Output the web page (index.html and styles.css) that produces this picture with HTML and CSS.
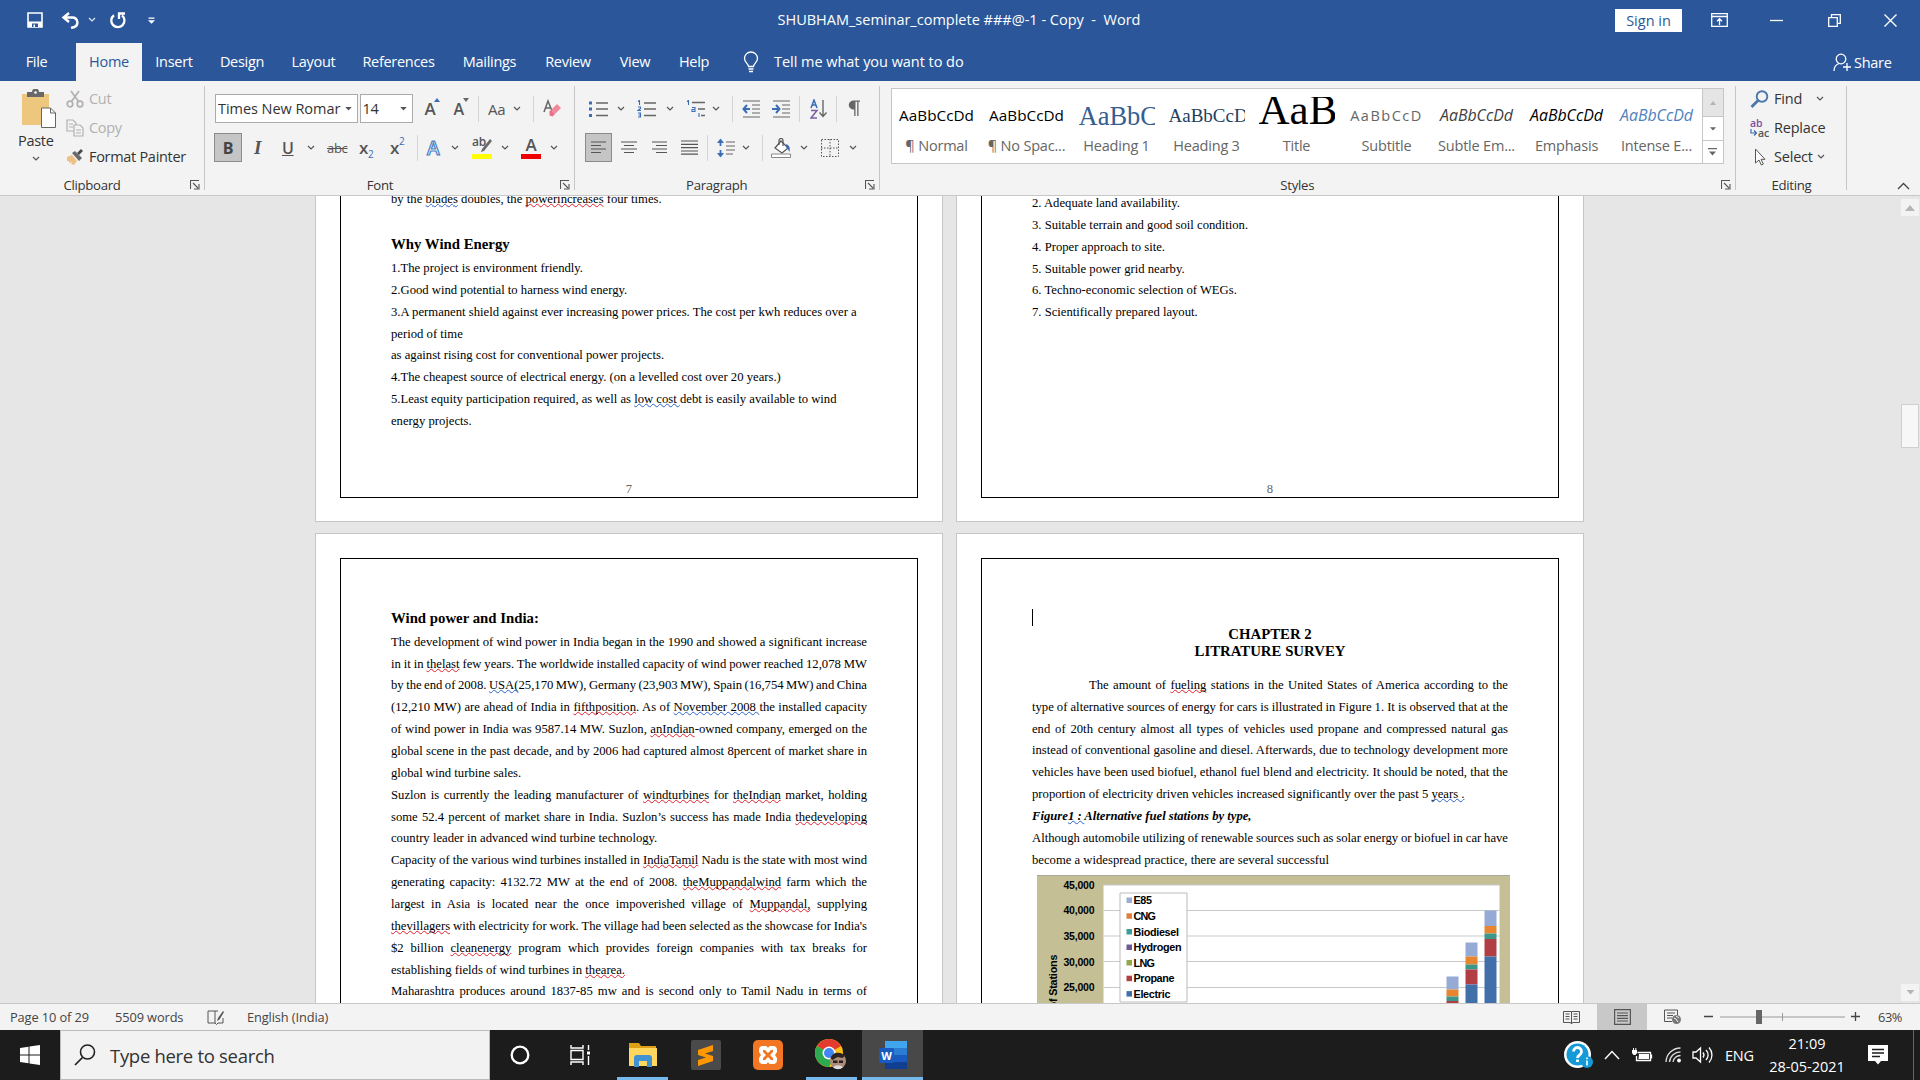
FILE: index.html
```html
<!DOCTYPE html>
<html lang="en">
<head>
<meta charset="utf-8">
<title>SHUBHAM_seminar_complete - Word</title>
<link rel="stylesheet" href="styles.css">
</head>
<body>
<svg width="0" height="0" class="defs">
  <symbol id="chev" viewBox="0 0 8 6"><path d="M1 1l3 3 3-3" fill="none" stroke="currentColor" stroke-width="1.2"/></symbol>
  <symbol id="launch" viewBox="0 0 10 10"><path d="M.5 9V.5H9M3 3l5 5M9 4v5H4" fill="none" stroke="#555" stroke-width="1.1"/></symbol>
  <symbol id="tri" viewBox="0 0 8 5"><path d="M0 0h8L4 4.5z" fill="currentColor"/></symbol>
</svg>

<header class="titlebar">
  <div class="quick">
    <svg width="16" height="16" viewBox="0 0 16 16"><path d="M1 1h14v14H1z" fill="none" stroke="#fff" stroke-width="1.6"/><path d="M1 9.500h14V15H1z" fill="#fff"/><path d="M5 11.500h6V15H5z" fill="#2b579a"/><path d="M6.500 12.500H8V15H6.500z" fill="#fff"/></svg>
    <svg width="19" height="17" viewBox="0 0 19 17"><path d="M8 1L2.500 5.500 8 10M3 5.500h8.500a5 5 0 0 1 2 9.500l-3.500 1" fill="none" stroke="#fff" stroke-width="2.400"/></svg>
    <svg width="8" height="6" color="#dfe8f5"><use href="#chev"/></svg>
    <svg width="18" height="17" viewBox="0 0 18 17"><path d="M5 3.200a6.600 6.600 0 1 0 8 .2M10 7V1.500h6" fill="none" stroke="#fff" stroke-width="2.300"/></svg>
    <svg width="7" height="7" viewBox="0 0 7 7"><path d="M.5.5h6v1.200h-6zM0 3.200h7L3.500 6.700z" fill="#fff"/></svg>
  </div>
  <div class="doc-title">SHUBHAM_seminar_complete ###@-1 - Copy&nbsp; -&nbsp; Word</div>
  <div class="window-tools">
    <span class="signin">Sign in</span>
    <svg width="17" height="14" viewBox="0 0 17 14"><path d="M.7.700h15.600v12.600H.7zM.7 3.500h15.600M8.500 12V6M6 8.200l2.500-2.500L11 8.200" fill="none" stroke="#fff" stroke-width="1.300"/></svg>
    <svg width="13" height="14" viewBox="0 0 13 14"><path d="M0 7.500h13" stroke="#fff" stroke-width="1.300"/></svg>
    <svg width="13" height="13" viewBox="0 0 13 13"><path d="M.7 3.700h8.600v8.600H.7zM3.500 3.500V.7h8.800v8.600H9.500" fill="none" stroke="#fff" stroke-width="1.300"/></svg>
    <svg width="13" height="13" viewBox="0 0 13 13"><path d="M.5.5l12 12M12.500.5l-12 12" stroke="#fff" stroke-width="1.400"/></svg>
  </div>
</header>

<nav class="tabs">
  <span>File</span><span class="on">Home</span><span>Insert</span><span>Design</span><span>Layout</span><span>References</span><span>Mailings</span><span>Review</span><span>View</span><span class="help">Help</span>
  <svg width="16" height="22" viewBox="0 0 16 22"><path d="M5.500 15.500c0-3-4-4-4-8a6.500 6.500 0 0 1 13 0c0 4-4 5-4 8zM5.500 18h5M6 20.500h4" fill="none" stroke="#fff" stroke-width="1.300"/></svg>
  <span class="tell">Tell me what you want to do</span>
  <svg width="19" height="19" viewBox="0 0 19 19"><circle cx="8" cy="6" r="4.800" fill="none" stroke="#fff" stroke-width="1.300"/><path d="M1 18c0-4 2-6.500 5-7.500M14 10v8M10 14h8" fill="none" stroke="#fff" stroke-width="1.300"/></svg>
  <span class="share">Share</span>
</nav>

<section class="ribbon">
  <div class="group clipboard">
    <div class="clip-body">
      <div class="paste">
        <svg width="36" height="40" viewBox="0 0 36 40"><path d="M1 5h27v31H1z" fill="#ecc77d"/><path d="M6 8V3h5a3.500 3.500 0 0 1 7 0h5v5z" fill="#686868"/><circle cx="14.500" cy="3.500" r="1.300" fill="#fff"/><path d="M20.500 19h9l5 5v14.500h-14z" fill="#fff" stroke="#666"/><path d="M29.500 19v5h5" fill="none" stroke="#666"/></svg>
        <span>Paste</span>
        <svg width="8" height="6" color="#555"><use href="#chev"/></svg>
      </div>
      <div class="clip-list">
        <div class="dim"><svg width="18" height="18" viewBox="0 0 18 18" fill="none" stroke="#b1b1b1" stroke-width="1.700"><circle cx="4" cy="14" r="2.800"/><circle cx="14" cy="14" r="2.800"/><path d="M5.500 11.500L13 1M12.500 11.500L5 1"/></svg>Cut</div>
        <div class="dim"><svg width="18" height="18" viewBox="0 0 18 18" fill="#f3f3f3" stroke="#b1b1b1" stroke-width="1.200"><path d="M1 1h6l3 3v8H1zM3 5h4M3 8h4"/><path d="M8 6h6l3 3v8H8zM10 11h5M10 14h5"/></svg>Copy</div>
        <div><svg width="18" height="18" viewBox="0 0 18 18"><path d="M1 9l5-2 5 6-3 4-3-1 1-2-3 1 0-2-2 0z" fill="#edc184"/><path d="M6 5l3-2 7 7-3 3z" fill="#6a6a6a"/><path d="M11 5l4-4 2 2-4 4z" fill="#4a4a4a"/></svg>Format Painter</div>
      </div>
    </div>
    <div class="foot"><span>Clipboard</span><svg width="10" height="10"><use href="#launch"/></svg></div>
  </div>

  <div class="group font">
    <div class="row font1">
      <span class="combo">Times New Romar<svg width="7" height="4" color="#555"><use href="#tri"/></svg></span>
      <span class="combo">14<svg width="7" height="4" color="#555"><use href="#tri"/></svg></span>
      <span class="glyph">A<svg width="6" height="4" viewBox="0 0 6 4"><path d="M0 4l3-4 3 4z" fill="#3a6db5"/></svg></span>
      <span class="glyph sm">A<svg width="6" height="4" viewBox="0 0 6 4"><path d="M0 0h6L3 4z" fill="#666"/></svg></span>
      <i class="sep"></i>
      <span class="glyph aa">Aa</span>
      <svg width="8" height="6" color="#555"><use href="#chev"/></svg>
      <i class="sep"></i>
      <svg width="20" height="20" viewBox="0 0 20 20"><path d="M1 13L5 2l4 10M2.500 9h5" fill="none" stroke="#666" stroke-width="1.500"/><path d="M8 11l6-6 4 4-6 6z" fill="#f08a9b"/><path d="M6.500 12.500l1.500-1.500 4 4-2.500 2.500-3-1z" fill="#e8718a"/></svg>
    </div>
    <div class="row font2">
      <span class="bold">B</span>
      <span class="glyph ital">I</span>
      <span class="glyph und">U</span>
      <svg width="8" height="6" color="#555"><use href="#chev"/></svg>
      <span class="glyph strike">abc</span>
      <span class="glyph">x<sub>2</sub></span>
      <span class="glyph">x<sup>2</sup></span>
      <i class="sep"></i>
      <span class="outline">A</span>
      <svg width="8" height="6" color="#555"><use href="#chev"/></svg>
      <svg width="22" height="22" viewBox="0 0 22 22"><text x="0" y="9" font-size="12" font-family="Open Sans" font-weight="600" fill="#555">ab</text><path d="M18 2l2 2-8 10-3 1 1-3z" fill="#6a6a6a"/><path d="M0 17h20v5H0z" fill="#ff0"/></svg>
      <svg width="8" height="6" color="#555"><use href="#chev"/></svg>
      <svg width="21" height="22" viewBox="0 0 21 22"><text x="4.500" y="14" font-size="17" font-family="Open Sans" font-weight="600" fill="#555">A</text><path d="M0 17h20v5H0z" fill="#f00000"/></svg>
      <svg width="8" height="6" color="#555"><use href="#chev"/></svg>
    </div>
    <div class="foot"><span>Font</span><svg width="10" height="10"><use href="#launch"/></svg></div>
  </div>

  <div class="group para">
    <div class="row para1">
      <svg width="19" height="18" viewBox="0 0 19 18"><path d="M0 1.500h3v3H0zM0 7.500h3v3H0zM0 14h3v3H0z" fill="#3a6db5"/><path d="M7 3h12M7 9h12M7 15.500h12" stroke="#666" stroke-width="1.300"/></svg>
      <svg width="8" height="6" color="#555"><use href="#chev"/></svg>
      <svg width="20" height="18" viewBox="0 0 20 18"><path d="M1 1.500l1.500-1V5M1 7h2.500v1.500L1 10.500h3M1 13h2.500v4H1M1.500 15h2" fill="none" stroke="#3a6db5" stroke-width="1.100"/><path d="M7 3h12M7 9h12M7 15.500h12" stroke="#666" stroke-width="1.300"/></svg>
      <svg width="8" height="6" color="#555"><use href="#chev"/></svg>
      <svg width="20" height="18" viewBox="0 0 20 18"><path d="M1 1.500l1.500-1V5M6 7.500h3v4H6v-2h3M13 13v4" fill="none" stroke="#3a6db5" stroke-width="1.100"/><path d="M6 2.500h13M12 9h7M15 15.500h4" stroke="#666" stroke-width="1.300"/></svg>
      <svg width="8" height="6" color="#555"><use href="#chev"/></svg>
      <i class="sep"></i>
      <svg width="19" height="18" viewBox="0 0 19 18"><path d="M1 1h17M10 5h8M10 9h8M10 13h8M1 17h17" stroke="#666" stroke-width="1.200"/><path d="M8 9H2M5 5L1.500 9 5 13" fill="none" stroke="#3a6db5" stroke-width="2"/></svg>
      <svg width="19" height="18" viewBox="0 0 19 18"><path d="M1 1h17M10 5h8M10 9h8M10 13h8M1 17h17" stroke="#666" stroke-width="1.200"/><path d="M0 9h6M4 5l3.500 4L4 13" fill="none" stroke="#3a6db5" stroke-width="2"/></svg>
      <i class="sep"></i>
      <svg width="18" height="20" viewBox="0 0 18 20"><path d="M1 9l3-8 3 8M2 6h4" fill="none" stroke="#3a6db5" stroke-width="1.500"/><path d="M1 11.500h6L1 19h6" fill="none" stroke="#7a5fa8" stroke-width="1.500"/><path d="M13 1v16M9.500 13.500l3.500 4 3.500-4" fill="none" stroke="#666" stroke-width="1.400"/></svg>
      <i class="sep"></i>
      <svg width="12" height="17" viewBox="0 0 12 17"><path d="M6 .5h6v1.300h-1.500V16H9.200V1.800H7.500V16H6.200V9.500C3 9.500.8 7.500.8 5S3 .5 6 .5z" fill="#666"/></svg>
    </div>
    <div class="row para2">
      <span class="lit"><svg width="15" height="13" viewBox="0 0 15 13"><path d="M0 1h15M0 4.500h10M0 8h15M0 11.500h10" stroke="#555" stroke-width="1.200"/></svg></span>
      <svg width="16" height="13" viewBox="0 0 16 13"><path d="M0 1h16M3 4.500h10M0 8h16M3 11.500h10" stroke="#555" stroke-width="1.200"/></svg>
      <svg width="15" height="13" viewBox="0 0 15 13"><path d="M0 1h15M4 4.500h11M0 8h15M4 11.500h11" stroke="#555" stroke-width="1.200"/></svg>
      <svg width="17" height="15" viewBox="0 0 17 15"><path d="M0 1h17M0 4.300h17M0 7.600h17M0 11h17M0 14.200h17" stroke="#555" stroke-width="1.200"/></svg>
      <i class="sep"></i>
      <svg width="18" height="20" viewBox="0 0 18 20"><path d="M3.500 2v6M3.500 12v6" stroke="#3a6db5" stroke-width="1.800"/><path d="M0 5l3.500-4.500L7 5zM0 15l3.500 4.500L7 15z" fill="#3a6db5"/><path d="M9 4h9M9 8h9M9 12h9M9 16h7" stroke="#666" stroke-width="1.200"/></svg>
      <svg width="8" height="6" color="#555"><use href="#chev"/></svg>
      <i class="sep"></i>
      <svg width="21" height="20" viewBox="0 0 21 20"><path d="M10 3l7 7-6 5-7-5z" fill="#fff" stroke="#555" stroke-width="1.200"/><path d="M8 7V2.500a2 2 0 0 1 4 0V8" fill="none" stroke="#555" stroke-width="1.200"/><path d="M15 6c3 1 4.500 3 3.500 8-1-2-1.500-3-3-4z" fill="#3a6db5"/><path d="M.5 16h19v3.500H.5z" fill="#fff" stroke="#888"/></svg>
      <svg width="8" height="6" color="#555"><use href="#chev"/></svg>
      <svg width="18" height="18" viewBox="0 0 18 18"><path d="M.5.500h17v17H.5zM9 0v18M0 9h18" fill="none" stroke="#555" stroke-dasharray="1.500 1.500"/></svg>
      <svg width="8" height="6" color="#555"><use href="#chev"/></svg>
    </div>
    <div class="foot"><span>Paragraph</span><svg width="10" height="10"><use href="#launch"/></svg></div>
  </div>

  <div class="group styles">
    <div class="gallery">
      <div class="style"><b>AaBbCcDd</b><span>¶ Normal</span></div>
      <div class="style"><b>AaBbCcDd</b><span>¶ No Spac...</span></div>
      <div class="style h1"><b>AaBbC</b><span>Heading 1</span></div>
      <div class="style h3"><b>AaBbCcD</b><span>Heading 3</span></div>
      <div class="style ttl"><b>AaB</b><span>Title</span></div>
      <div class="style sub"><b>AaBbCcD</b><span>Subtitle</span></div>
      <div class="style it dark"><b>AaBbCcDd</b><span>Subtle Em...</span></div>
      <div class="style it"><b>AaBbCcDd</b><span>Emphasis</span></div>
      <div class="style it blue"><b>AaBbCcDd</b><span>Intense E...</span></div>
      <div class="gal-scroll">
        <span class="off"><svg width="6" height="4" viewBox="0 0 6 4"><path d="M0 4l3-4 3 4z" fill="#b5b5b5"/></svg></span>
        <span><svg width="6" height="4" color="#666"><use href="#tri"/></svg></span>
        <span><svg width="9" height="8" viewBox="0 0 9 8"><path d="M0 0h9v1.300H0zM1 3.500h7L4.500 7.500z" fill="#666"/></svg></span>
      </div>
    </div>
    <div class="foot"><span>Styles</span><svg width="10" height="10"><use href="#launch"/></svg></div>
  </div>

  <div class="group editing">
    <div class="edit-list">
      <div><svg width="19" height="18" viewBox="0 0 19 18"><circle cx="12" cy="6.500" r="5.300" fill="none" stroke="#4a78ab" stroke-width="1.900"/><path d="M8 10.500L1.500 17" stroke="#4a78ab" stroke-width="2.800"/></svg>Find<svg class="c1" width="8" height="6" color="#555"><use href="#chev"/></svg></div>
      <div><svg width="19" height="18" viewBox="0 0 19 18"><text x="0" y="7.500" font-size="10.500" font-family="Open Sans" font-weight="600" fill="#7a4fa8">ab</text><text x="8" y="17.500" font-size="10.500" font-family="Open Sans" font-weight="600" fill="#555">ac</text><path d="M1 10v4h5M4 11.500L6.500 14 4 16.500" fill="none" stroke="#3a6db5" stroke-width="1.200"/></svg>Replace</div>
      <div><svg width="19" height="18" viewBox="0 0 19 18"><path d="M5.500 1v14l3.500-3 2.300 5 2-1-2.300-4.700h4z" fill="#fff" stroke="#555"/></svg>Select<svg class="c2" width="8" height="6" color="#555"><use href="#chev"/></svg></div>
    </div>
    <div class="foot"><span>Editing</span></div>
  </div>
  <svg class="collapse" width="13" height="8" viewBox="0 0 13 8"><path d="M1 7l5.500-5.500L12 7" fill="none" stroke="#444" stroke-width="1.300"/></svg>
</section>

<main class="workspace">
  <div class="pages">
    <article class="page upper">
      <div class="frame p7">
        <p>by the <u class="g">blades</u> doubles, the <u>powerincreases</u> four times.</p>
        <h2>Why Wind Energy</h2>
        <p>1.The project is environment friendly.</p>
        <p>2.Good wind potential to harness wind energy.</p>
        <p>3.A permanent shield against ever increasing power prices. The cost per kwh reduces over a</p>
        <p>period of time</p>
        <p>as against rising cost for conventional power projects.</p>
        <p>4.The cheapest source of electrical energy. (on a levelled cost over 20 years.)</p>
        <p>5.Least equity participation required, as well as <u class="g">low cost </u>debt is easily available to wind</p>
        <p>energy projects.</p>
        <footer>7</footer>
      </div>
    </article>
    <article class="page upper">
      <div class="frame p8">
        <p>2. Adequate land availability.</p>
        <p>3. Suitable terrain and good soil condition.</p>
        <p>4. Proper approach to site.</p>
        <p>5. Suitable power grid nearby.</p>
        <p>6. Techno-economic selection of WEGs.</p>
        <p>7. Scientifically prepared layout.</p>
        <footer>8</footer>
      </div>
    </article>
    <article class="page lower">
      <div class="frame p9">
        <h2>Wind power and India:</h2>
        <p class="j">The development of wind power in India began in the 1990 and showed a significant increase</p>
        <p class="j">in it in <u>thelast</u> few years. The worldwide installed capacity of wind power reached 12,078 MW</p>
        <p class="j">by the end of 2008. <u class="g">USA(</u>25,170 MW), Germany (23,903 MW), Spain (16,754 MW) and China</p>
        <p class="j">(12,210 MW) are ahead of India in <u>fifthposition</u>. As of <u class="g">November 2008 </u>the installed capacity</p>
        <p class="j">of wind power in India was 9587.14 MW. Suzlon, <u>anIndian</u>-owned company, emerged on the</p>
        <p class="j">global scene in the past decade, and by 2006 had captured almost 8percent of market share in</p>
        <p>global wind turbine sales.</p>
        <p class="j">Suzlon is currently the leading manufacturer of <u>windturbines</u> for <u>theIndian</u> market, holding</p>
        <p class="j">some 52.4 percent of market share in India. Suzlon’s success has made India <u>thedeveloping</u></p>
        <p>country leader in advanced wind turbine technology.</p>
        <p class="j">Capacity of the various wind turbines installed in <u>IndiaTamil</u> Nadu is the state with most wind</p>
        <p class="j">generating capacity: 4132.72 MW at the end of 2008. <u>theMuppandalwind</u> farm which the</p>
        <p class="j">largest in Asia is located near the once impoverished village of <u>Muppandal,</u> supplying</p>
        <p class="j"><u>thevillagers</u> with electricity for work. The village had been selected as the showcase for India's</p>
        <p class="j">$2 billion <u>cleanenergy</u> program which provides foreign companies with tax breaks for</p>
        <p>establishing fields of wind turbines in <u>thearea.</u></p>
        <p class="j">Maharashtra produces around 1837-85 mw and is second only to Tamil Nadu in terms of</p>
      </div>
    </article>
    <article class="page lower">
      <div class="frame p10">
        <div class="caret"></div>
        <h3>CHAPTER 2</h3>
        <h3>LITRATURE SURVEY</h3>
        <div class="body">
          <p class="j indent">The amount of <u>fueling</u> stations in the United States of America according to the</p>
          <p class="j">type of alternative sources of energy for cars is illustrated in Figure 1. It is observed that at the</p>
          <p class="j">end of 20th century almost all types of vehicles used propane and compressed natural gas</p>
          <p class="j">instead of conventional gasoline and diesel. Afterwards, due to technology development more</p>
          <p class="j">vehicles have been used biofuel, ethanol fuel blend and electricity. It should be noted, that the</p>
          <p>proportion of electricity driven vehicles increased significantly over the past 5 <u class="g">years .</u></p>
          <p class="cap">Figure<u class="g">1 : </u>Alternative fuel stations by type,</p>
          <p class="j">Although automobile utilizing of renewable sources such as solar energy or biofuel in car have</p>
          <p>become a widespread practice, there are several successful</p>
        </div>
        <svg class="chart" width="473" height="129" viewBox="1037.500 875.500 473 129">
          <path d="M1037 875h474v130h-474z" fill="#c5bf95"/><path d="M1037 875h474v1.500h-474z" fill="#a9a9a0"/>
          <path d="M1104 885.500h396v120h-396z" fill="#fff"/>
          <path d="M1104 885.500h396M1104 911h396M1104 936.500h396M1104 962h396M1104 988h396" stroke="#c9c9c9"/>
          <path d="M1120.500 893.500h67v109h-67z" fill="#fff" stroke="#bbb"/>
          <g class="ylab"><text x="1095" y="889" textLength="31">45,000</text><text x="1095" y="914.700" textLength="31">40,000</text><text x="1095" y="940.300" textLength="31">35,000</text><text x="1095" y="966" textLength="31">30,000</text><text x="1095" y="991.700" textLength="31">25,000</text></g>
          <text transform="rotate(-90 1057 955)" x="1057" y="955" text-anchor="end" textLength="54">of Stations</text>
          <path d="M1127 898h5.500v5.500h-5.500z" fill="#98aed4"/><path d="M1127 913.800h5.500v5.500h-5.500z" fill="#e07f3a"/><path d="M1127 929.500h5.500v5.500h-5.500z" fill="#3c9c9c"/><path d="M1127 945h5.500v5.500h-5.500z" fill="#705a94"/><path d="M1127 960.500h5.500v5.500h-5.500z" fill="#8fa84a"/><path d="M1127 976.200h5.500v5.500h-5.500z" fill="#b04040"/><path d="M1127 991.600h5.500v5.500h-5.500z" fill="#3f6ea8"/>
          <text x="1134" y="904.700" textLength="18.500">E85</text><text x="1134" y="920.400" textLength="22.500">CNG</text><text x="1134" y="936" textLength="45.500">Biodiesel</text><text x="1134" y="951.500" textLength="48">Hydrogen</text><text x="1134" y="967" textLength="21.500">LNG</text><text x="1134" y="982.700" textLength="41">Propane</text><text x="1134" y="998.200" textLength="37">Electric</text>
          <path d="M1447 977h12v13h-12zM1466 943h12v14h-12zM1485 911h12v15.500h-12z" fill="#95abd5"/>
          <path d="M1447 990h12v7h-12zM1466 957h12v8h-12zM1485 926.500h12v7.500h-12z" fill="#e8852f"/>
          <path d="M1447 997h12v4.500h-12zM1466 965h12v5h-12zM1485 934h12v5.500h-12z" fill="#3d968a"/>
          <path d="M1447 1001.500h12v4h-12zM1466 970h12v15h-12zM1485 939.500h12V957h-12z" fill="#b03e42"/>
          <path d="M1466 985h12v20h-12zM1485 957h12v48h-12z" fill="#416fa9"/>
        </svg>
      </div>
    </article>
  </div>
  <aside class="vscroll">
    <span class="btn"><svg width="10" height="6" viewBox="0 0 10 6"><path d="M0 6l5-6 5 6z" fill="#b5b5b5"/></svg></span>
    <span class="thumb"></span>
    <span class="btn"><svg width="9" height="5" color="#b5b5b5"><use href="#tri"/></svg></span>
  </aside>
</main>

<div class="status">
  <span class="s1">Page 10 of 29</span><span class="s2">5509 words</span>
  <svg width="18" height="17" viewBox="0 0 18 17"><path d="M8 14V2H1v12h7l1.500 1.500L11 14h5V9M8 2h3" fill="none" stroke="#555"/><path d="M16 2l-5 7-1 3 2.500-1.500L17 3z" fill="#555"/></svg>
  <span class="s3">English (India)</span>
  <svg width="17" height="15" viewBox="0 0 17 15"><path d="M8.500 2v12M8.500 1.500H.5v11h7l1 1.500 1-1.500h7v-11zM2.500 4h4M2.500 6.500h4M2.500 9h4M10.500 4h4M10.500 6.500h4M10.500 9h4" fill="none" stroke="#555"/></svg>
  <span class="view-on"><svg width="17" height="16" viewBox="0 0 17 16"><path d="M.6.600h15.800v14.800H.6zM3 4h11M3 6.700h11M3 9.300h11M3 12h11" fill="none" stroke="#555" stroke-width="1.200"/></svg></span>
  <svg width="18" height="16" viewBox="0 0 18 16"><path d="M8 12.500H.5V1h13v5M3 4h8M3 6.500h6M3 9h5" fill="none" stroke="#555"/><circle cx="12.500" cy="10.500" r="4.500" fill="#777"/><path d="M10 9l2 1 2 3M12 7l3 2" stroke="#f3f3f3" fill="none"/></svg>
  <svg width="156" height="16" viewBox="0 0 156 16"><path d="M0 7.500h9M147 7.500h9M151.500 3v9" stroke="#444" stroke-width="1.300"/><path d="M16 8h125M78.500 4v8" stroke="#999"/><path d="M52 1h6v14h-6z" fill="#666"/></svg>
  <span class="pct">63%</span>
</div>

<footer class="taskbar">
  <svg width="20" height="20" viewBox="0 0 20 20"><path d="M0 3l8.500-1.300v7.800H0zM9.500 1.500L20 0v9.500H9.500zM0 10.500h8.500v7.800L0 17zM9.500 10.500H20V20L9.500 18.500z" fill="#fff"/></svg>
  <div class="search"><svg width="22" height="22" viewBox="0 0 22 22"><circle cx="13.500" cy="8" r="7" fill="none" stroke="#222" stroke-width="1.600"/><path d="M8.500 13.500L1 21" stroke="#222" stroke-width="1.700"/></svg>Type here to search</div>
  <div class="apps">
    <span><svg width="20" height="20" viewBox="0 0 20 20"><circle cx="10" cy="10" r="8.300" fill="none" stroke="#fff" stroke-width="2.300"/></svg></span>
    <span><svg width="21" height="20" viewBox="0 0 21 20"><path d="M1 0v3h12V0M1 20v-3h12v3M1 5.500h12v9H1zM18.500 0v5M18.500 11v9" fill="none" stroke="#fff" stroke-width="1.400"/><path d="M17 6.500h3v3h-3z" fill="#fff"/></svg></span>
    <span class="run"><svg width="28" height="24" viewBox="0 0 28 24"><path d="M0 0h10l2 3h15v5H0z" fill="#e0a016"/><path d="M0 5h28v18H0z" fill="#ffd75e"/><path d="M5 24v-9a3 3 0 0 1 3-3h12a3 3 0 0 1 3 3v9h-5v-6h-8v6z" fill="#3f93d2"/></svg></span>
    <span><svg width="30" height="30" viewBox="0 0 30 30"><rect width="30" height="30" rx="2" fill="#4a4a4a"/><path d="M7 10l15-5v6l-8 2.500 8 2.500v5L7 26v-6l8-2.500L7 15z" fill="#ff9800"/></svg></span>
    <span><svg width="30" height="30" viewBox="0 0 30 30"><rect width="30" height="30" rx="5" fill="#f37623"/><path d="M10 6h3.500l1.500 2 1.500-2H20a4 4 0 0 1 4 4v2l-2 3 2 3v2a4 4 0 0 1-4 4h-3.500L15 22l-1.500 2H10a4 4 0 0 1-4-4v-2l2-3-2-3v-2a4 4 0 0 1 4-4z" fill="#fff"/><path d="M10 10h2l3 3 3-3h2v2l-3 3 3 3v2h-2l-3-3-3 3h-2v-2l3-3-3-3z" fill="#f37623"/></svg></span>
    <span class="run"><svg width="32" height="32" viewBox="0 0 32 32"><circle cx="14" cy="14" r="14" fill="#fbc116"/><path d="M14 14L1.900 7a14 14 0 0 1 24.200 0z" fill="#e33b2e"/><path d="M14 14L1.900 7A14 14 0 0 0 14 28l6-10.500z" fill="#2da94f"/><circle cx="14" cy="14" r="6.500" fill="#fff"/><circle cx="14" cy="14" r="5" fill="#4285f4"/><circle cx="23" cy="22" r="8" fill="#b08c78"/><path d="M15.500 19a8 8 0 0 1 14-2l-2 2-5-1-5 3z" fill="#2a2422"/><path d="M18 21.500h4.500v2.500H18zM24 21.500h4v2.500h-4z" fill="#222"/><path d="M18 28c3 3 7 3 10 0l-3-1.500h-4z" fill="#ddd"/></svg></span>
    <span class="run active"><svg width="28" height="28" viewBox="0 0 28 28"><rect x="6" width="22" height="28" rx="2" fill="#2b7cd3"/><path d="M6 0h22v7H6z" fill="#41a5ee"/><path d="M6 14h22v7H6z" fill="#185abd"/><path d="M6 21h22v7H6z" fill="#103f91"/><rect y="7" width="15" height="15" rx="1.500" fill="#185abd"/><text x="7.500" y="18.500" text-anchor="middle" font-family="Open Sans" font-size="11" font-weight="700" fill="#fff">W</text></svg></span>
  </div>
  <div class="tray">
    <svg width="29" height="28" viewBox="0 0 29 28"><circle cx="13.500" cy="13.500" r="13.500" fill="#fff"/><circle cx="13.500" cy="13.500" r="11" fill="#149bd7"/><path d="M9.500 10.500a4 4 0 1 1 6 3.500c-1.500 1-2 1.500-2 3M13.500 18.500v2.500" fill="none" stroke="#fff" stroke-width="2.800"/><circle cx="23" cy="21" r="6" fill="#149bd7"/><path d="M23 19.500v5M23 16.500v1.700" stroke="#fff" stroke-width="1.600"/></svg>
    <svg width="16" height="10" viewBox="0 0 16 10"><path d="M1 9l7-7.500L15 9" fill="none" stroke="#fff" stroke-width="1.400"/></svg>
    <svg width="21" height="14" viewBox="0 0 21 14"><path d="M5.500 4.500h13v8h-14V8M19.500 6.500v4" fill="none" stroke="#fff" stroke-width="1.300"/><path d="M7 6h10v5H6.500zM0 2h5v3L3.500 7h-2L0 5zM1 0h1v2H1zM3.300 0h1v2h-1z" fill="#fff"/></svg>
    <svg width="17" height="16" viewBox="0 0 17 16"><path d="M1 15A14.500 14.500 0 0 1 15.500 1M4.500 15A11 11 0 0 1 15.500 4.800M8 15a7.500 7.500 0 0 1 7.500-6.500" fill="none" stroke="#ddd" stroke-width="1.300"/><circle cx="14" cy="13.500" r="1.900" fill="#fff"/></svg>
    <svg width="21" height="18" viewBox="0 0 21 18"><path d="M1 6h3l4.500-4v14L4 12H1zM11 6.500a4 4 0 0 1 0 5M14 4a7 7 0 0 1 0 10M17 1.500a11 11 0 0 1 0 15" fill="none" stroke="#fff" stroke-width="1.300"/></svg>
    <span class="lang">ENG</span>
    <span class="clock"><span>21:09</span><span>28-05-2021</span></span>
    <svg width="20" height="20" viewBox="0 0 20 20"><path d="M0 0h20v16h-7l-3 3.500L7 16H0z" fill="#fff"/><path d="M4 4.500h12M4 8h12M4 11.500h8" stroke="#1c1c1c" stroke-width="1.300"/></svg>
    <i class="peek"></i>
  </div>
</footer>
</body>
</html>
```
FILE: styles.css
```css
* { box-sizing: border-box; }
body { margin: 0; width: 1920px; height: 1080px; overflow: hidden; display: flex; flex-direction: column; font-family: "Open Sans", "Noto Sans", sans-serif; font-size: 14.5px; letter-spacing: -0.3px; color: #333; }
.defs { position: absolute; }
svg { display: block; flex: none; }

/* Title bar and tabs */
.titlebar { height: 43px; flex: none; background: #2b579a; display: grid; grid-template-columns: 776px 366px 1fr; color: #fff; }
.quick { display: grid; grid-template-columns: 34px 27px 21px 39px 20px; padding-left: 27px; height: 40px; align-items: center; }
.doc-title { line-height: 40px; text-align: center; white-space: nowrap; letter-spacing: 0; }
.window-tools { display: grid; grid-template-columns: 96px 59px 58px 56px 20px; padding-left: 473px; height: 40px; align-items: center; }
.signin { width: 67px; height: 23px; line-height: 23px; background: #fff; color: #2b579a; text-align: center; letter-spacing: 0; }
.tabs { height: 38px; flex: none; background: #2b579a; color: #fff; display: grid; grid-template-columns: 73px 69px 64px 72px 71px 99px 83px 74px 60px 78px 31px 1fr 21px 66px; align-items: center; }
.tabs span { height: 38px; line-height: 38px; text-align: center; }
.tabs .on { background: #f3f3f3; color: #2b579a; margin: 0 0 0 3px; }
.tabs .tell { text-align: left; letter-spacing: -0.04px; }
.tabs .share { text-align: left; line-height: 40px; }
.tabs .help { padding-right: 20px; }

/* Ribbon */
.ribbon { height: 115px; flex: none; background: #f3f3f3; border-bottom: 1px solid #c8c8c8; display: flex; position: relative; }
.group { position: relative; display: flex; flex-direction: column; padding-top: 7px; }
.group::after { content: ""; position: absolute; right: 0; top: 5px; width: 1px; height: 104px; background: #c6c6c6; }
.clipboard { width: 205px; } .font { width: 370px; } .para { width: 304.5px; } .styles { width: 856.5px; } .editing { width: 111px; }
.foot { margin-top: auto; height: 22px; display: flex; align-items: center; font-size: 13.2px; padding-bottom: 0; margin-bottom: -1px; }
.foot span { flex: 1; text-align: center; }
.foot svg { margin: -1px 5px 0 0; }
.clipboard .foot span { padding-right: 6px; }
.font .foot span { padding-right: 5px; }
.para .foot span, .styles .foot span { padding-right: 6px; }
.clip-body { display: flex; }
.paste { width: 67px; padding-left: 21px; padding-top: 1px; }
.paste span { display: block; margin: 2px 0 0 -3px; line-height: 19px; }
.paste > svg:last-child { margin: 6px 0 0 11px; }
.clip-list div { height: 29px; display: flex; align-items: center; gap: 5px; white-space: nowrap; }
.clip-list { margin-top: -4px; margin-left: -1px; }
.clip-list .dim { color: #b1b1b1; }
.row { display: grid; align-items: center; height: 29px; white-space: nowrap; }
.font1 { grid-template-columns: 144.500px 65px 29px 24.500px 10px 25px 20px 10px 1fr; padding-left: 10px; margin-top: 6px; }
.font2 { grid-template-columns: 40px 28px 25px 20px 32px 31px 27px 10px 24px 21px 29px 20px 29px 1fr; padding-left: 9px; margin-top: 10px; }
.para1 { grid-template-columns: 28px 20px 29px 20px 26px 20px 10px 30px 27px 11px 26px 12px 1fr; padding-left: 14px; margin-top: 6px; }
.para2 { grid-template-columns: 36px 31px 29px 26px 10px 25px 20px 9px 29px 21px 28px 1fr; padding-left: 10px; margin-top: 10px; }
.sep { width: 1px; height: 26px; background: #d4d4d4; }
.combo { height: 29px; border: 1px solid #ababab; background: #fff; display: flex; align-items: center; justify-content: space-between; padding: 0 5px 0 2px; margin-right: 2px; letter-spacing: -0.050px; }
.combo + .combo { width: 53.500px; letter-spacing: -0.400px; }
.glyph { font-size: 17px; font-weight: 600; color: #555; line-height: 24px; display: flex; }
.glyph svg { margin: 1px 0 0 -1px; }
.glyph.sm { font-size: 16px; } .glyph.aa { font-size: 15px; font-weight: 400; }
.glyph sub, .glyph sup { font-size: 10px; color: #3a6db5; font-weight: 400; line-height: 10px; }
.glyph sub { padding-top: 13px; }
.bold, .lit { width: 28px; height: 29px; background: #c5c5c5; border: 1px solid #8a8a8a; display: flex; align-items: center; justify-content: center; font-weight: 700; font-size: 16px; color: #444; }
.lit { width: 27px; }
.ital { font-family: "Liberation Serif", serif; font-style: italic; font-weight: 700; font-size: 19px; }
.und { text-decoration: underline; font-size: 16px; }
.strike { font-size: 13px; font-weight: 400; text-decoration: line-through; }
.outline { font-size: 19px; line-height: 26px; font-weight: 600; color: #fff; -webkit-text-stroke: 1.200px #4a80c4; }

.gallery { margin: 0 12.500px 0 11px; height: 76px; background: #fff; border: 1px solid #c6c6c6; display: grid; grid-template-columns: repeat(9, 90px) 1fr; }
.style { padding: 8px 7px 0; text-align: center; }
.style b { display: flex; justify-content: center; height: 38px; line-height: 37px; font-weight: 400; color: #000; overflow: hidden; white-space: nowrap; font-size: 15.300px; letter-spacing: 0; }
.style span { display: block; line-height: 20px; color: #666; white-space: nowrap; margin: 1px -6px 0; letter-spacing: -0.200px; }
.h1 b, .h3 b, .ttl b { font-family: "Liberation Serif", serif; justify-content: flex-start; }
.h1 b { color: #365f91; font-size: 26.500px; line-height: 39px; } .h3 b { color: #243f60; font-size: 19px; } .ttl b { font-size: 43px; line-height: 26px; }
.sub b { color: #666; letter-spacing: 1.500px; font-size: 14.500px; }
.it b { font-style: italic; font-size: 15.900px; } .dark b { color: #404040; } .blue b { color: #4f81bd; }
.gal-scroll { display: grid; grid-template-rows: 27px 24px 1fr; border-left: 1px solid #c6c6c6; }
.gal-scroll span { display: flex; align-items: center; justify-content: center; border-top: 1px solid #c6c6c6; }
.gal-scroll .off { background: #e5e5e5; border: 0; }
.edit-list { padding-left: 14px; margin-top: -4px; letter-spacing: -0.200px; }
.edit-list div { height: 29px; display: flex; align-items: center; gap: 5px; }
.c1 { margin-left: 9px; } .c2 { margin-left: -1px; }
.collapse { margin: 101px 0 0 50px; }

/* Document */
.workspace { height: 808px; flex: none; background: #e6e6e6; display: flex; justify-content: space-between; border-bottom: 1px solid #c8c8c8; overflow: hidden; }
.pages { display: grid; grid-template: 326px 471px / 628px 628px; column-gap: 13px; row-gap: 11px; padding-left: 315px; }
.page { background: #fff; border: 1px solid #c6c6c6; padding: 0 24px; color: #000; overflow: hidden; }
.upper { border-top: 0; padding-bottom: 23px; }
.lower { padding-top: 24px; border-bottom: 0; }
.frame { height: 100%; border: 1px solid #000; padding: 0 50px; font: 12.680px/21.870px "Liberation Serif", serif; letter-spacing: 0; display: flex; flex-direction: column; }
.upper .frame { border-top: 0; } .lower .frame { border-bottom: 0; }
.frame > *, .body > * { flex: none; }
.frame p { margin: 0; white-space: nowrap; height: 21.870px; }
.frame .j { text-align: justify; text-align-last: justify; white-space: normal; word-spacing: -1.500px; }
.frame .indent { padding-left: 57px; }
.frame u { text-decoration: underline wavy #e0202c 1px; text-underline-offset: 0; text-decoration-skip-ink: none; white-space: pre; }
.frame u.g { text-decoration-color: #2a62cc; }
.frame h2, .frame h3 { margin: 0; font-size: 14.800px; }
.p7 h2 { line-height: 24px; margin-top: 21.300px; height: 25.500px; }
.p7 > p:first-child { margin-top: -6.700px; }
.p8 > p:first-child { margin-top: -3px; }
.frame footer { margin-top: auto; text-align: center; color: #666; line-height: 16px; }
.p9 { padding-top: 46.500px; }
.p9 h2 { line-height: 24.800px; height: 26.200px; }
.p10 { padding-top: 49.500px; }
.caret { width: 1px; height: 17px; background: #000; }
.p10 h3 { text-align: center; line-height: 17px; }
.body { margin-top: 15.300px; }
.cap { font-weight: 700; font-style: italic; }
.chart { margin: 3px 0 0 5px; overflow: hidden; font: bold 10.800px "Liberation Sans", sans-serif; width: 473px; }
.ylab { font-size: 10.500px; text-anchor: end; }
.vscroll { width: 20px; display: flex; flex-direction: column; align-items: center; padding: 3px 0 2px; }
.btn { width: 18px; height: 17px; background: #f3f3f3; display: flex; align-items: center; justify-content: center; flex: none; }
.thumb { width: 18px; height: 44px; background: #f7f7f7; border: 1px solid #d0d0d0; margin: 188px 0 auto; }

/* Status bar */
.status { height: 26px; flex: none; background: #f3f3f3; display: grid; grid-template-columns: 105px 92px 40px 1316px 34px 67px 40px 174px 31px; padding-left: 10px; align-items: center; font-size: 12.800px; letter-spacing: -0.100px; white-space: nowrap; color: #444; }
.pct { letter-spacing: -0.400px; }
.view-on { width: 50px; height: 26px; background: #c8c8c8; display: flex; align-items: center; justify-content: center; }

/* Taskbar */
.taskbar { height: 50px; flex: none; background: #1c1c1c; display: flex; align-items: center; padding-left: 20px; color: #fff; }
.search { margin-left: 20px; width: 430px; height: 50px; border: 1px solid #bbb; background: #f2f2f2; color: #333; font-size: 18.500px; display: flex; align-items: center; gap: 14px; padding-left: 13px; }
.apps { display: grid; grid-template-columns: 60px 60px 66px 60px 63px 63px 61px; }
.apps span { height: 50px; display: flex; align-items: center; justify-content: center; position: relative; }
.run::after { content: ""; position: absolute; left: 7px; bottom: 0; width: 51px; height: 3px; background: #76b9ed; }
.active { background: #484848; } .active::after { left: 0; width: 61px; }
.tray { margin-left: auto; display: grid; grid-template-columns: 40px 28px 33px 27px 33px 38px 105px 45px 7px; align-items: center; }
.lang { letter-spacing: -0.200px; }
.clock { text-align: center; line-height: 23px; width: 88px; display: flex; flex-direction: column; letter-spacing: 0; }
.peek { width: 1px; height: 50px; background: #666; }
```
